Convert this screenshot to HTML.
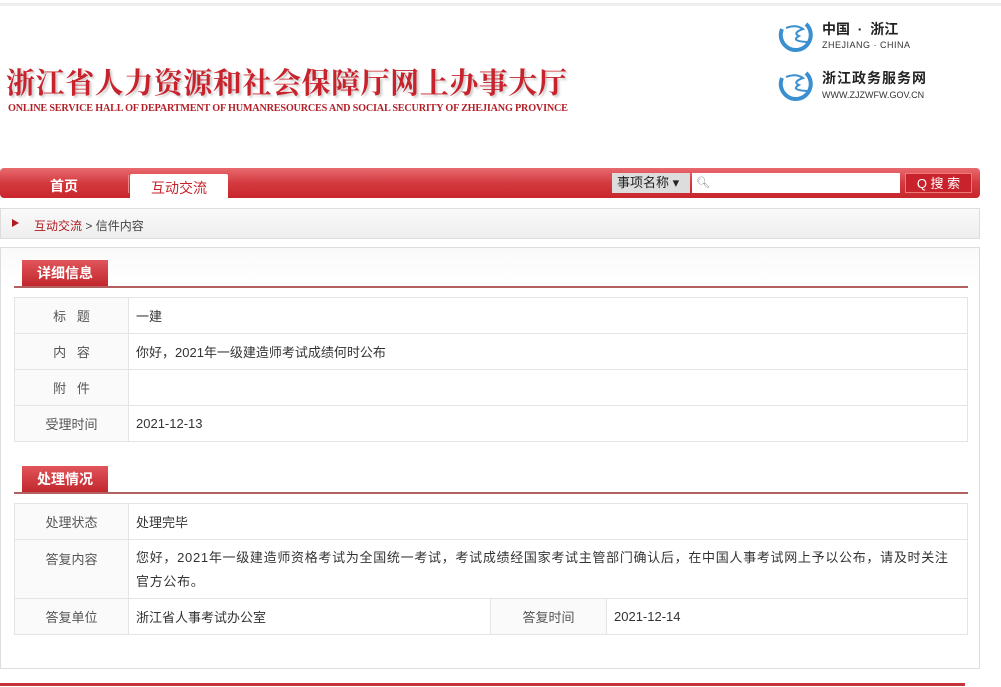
<!DOCTYPE html>
<html><head><meta charset="utf-8"><style>
*{margin:0;padding:0;box-sizing:border-box}
body{width:1001px;height:687px;background:#fff;position:relative;overflow:hidden;font-family:"Liberation Sans","Noto Sans CJK SC",sans-serif;font-size:13px;color:#333}
.a{position:absolute}
.title{left:6px;top:61px;font-family:"Liberation Serif","Noto Serif CJK SC",serif;font-size:29px;font-weight:bold;color:#c8232c;letter-spacing:0.55px;white-space:nowrap;text-shadow:2px 2px 2px #ccc}
.sub{left:8px;top:103px;font-family:"Liberation Serif",serif;font-size:10.2px;color:#b32028;white-space:nowrap;font-weight:bold;letter-spacing:-0.2px}
.nav{left:0;top:168px;width:980px;height:30px;background:linear-gradient(#e86a6e,#d33a3f 50%,#c8262c);border-radius:4px}
table{border-collapse:collapse;position:absolute;left:14px;width:954px}
td{border:1px solid #e4e4e4;height:36px;padding-left:7px;font-size:13px;color:#333}
td.l{width:114px;text-align:center;padding:0;color:#555;background:#fafafa}
.hd{position:absolute;left:22px;width:86px;height:27px;background:linear-gradient(#e0555a,#c0262c);color:#fff;font-weight:bold;font-size:14px;line-height:27px;text-align:center}
.ln{position:absolute;left:14px;width:954px;height:2px;background:#b26060}
</style></head><body>
<div class="a" style="left:0;top:3px;width:1001px;height:3px;background:#eee"></div>
<div class="a title">浙江省人力资源和社会保障厅网上办事大厅</div>
<div class="a sub">ONLINE SERVICE HALL OF DEPARTMENT OF HUMANRESOURCES AND SOCIAL SECURITY OF ZHEJIANG PROVINCE</div>

<svg class="a" style="left:776px;top:17px" width="38" height="38" viewBox="0 0 38 38"><path d="M6 12 A15 15 0 1 0 30 7" fill="none" stroke="#3a8fd0" stroke-width="4"/><path d="M10 11 Q20 7 27 12 Q16 16 23 19 Q14 24 31 25" fill="none" stroke="#3a8fd0" stroke-width="2"/></svg>
<div class="a" style="left:822px;top:19px;font-weight:bold;font-size:14px;color:#222">中国 &nbsp;·&nbsp; 浙江</div>
<div class="a" style="left:822px;top:40px;font-size:9px;color:#333;letter-spacing:.5px">ZHEJIANG · CHINA</div>
<svg class="a" style="left:776px;top:66px" width="38" height="38" viewBox="0 0 38 38"><path d="M6 12 A15 15 0 1 0 30 7" fill="none" stroke="#3a8fd0" stroke-width="4"/><path d="M10 11 Q20 7 27 12 Q16 16 23 19 Q14 24 31 25" fill="none" stroke="#3a8fd0" stroke-width="2"/></svg>
<div class="a" style="left:822px;top:68px;font-weight:bold;font-size:14px;color:#222;letter-spacing:1px">浙江政务服务网</div>
<div class="a" style="left:822px;top:90px;font-size:9px;color:#333">WWW.ZJZWFW.GOV.CN</div>

<div class="a nav"></div>
<div class="a" style="left:50px;top:176px;color:#fff;font-weight:bold;font-size:14px">首页</div>
<div class="a" style="left:128px;top:175px;width:1px;height:18px;background:#e88"></div>
<div class="a" style="left:130px;top:174px;width:98px;height:24px;background:#fff;border-radius:2px 2px 0 0;text-align:center;line-height:28px;color:#c8232c;font-size:14px">互动交流</div>
<div class="a" style="left:612px;top:173px;width:78px;height:20px;background:#ddd;font-size:13px;line-height:20px;padding-left:5px;color:#222">事项名称 ▾</div>
<div class="a" style="left:692px;top:173px;width:208px;height:20px;background:#fff;font-size:11px;line-height:20px;padding-left:4px;color:#888">🔍︎</div>
<div class="a" style="left:905px;top:173px;width:67px;height:20px;background:#c8232c;color:#fff;font-size:13px;line-height:20px;text-align:center;border:1px solid #e77">Q 搜 索</div>

<div class="a" style="left:0;top:208px;width:980px;height:31px;border:1px solid #ddd;background:linear-gradient(#fafafa,#eee)"></div>
<div class="a" style="left:12px;top:219px;width:0;height:0;border-left:7px solid #b01a20;border-top:4px solid transparent;border-bottom:4px solid transparent"></div>
<div class="a" style="left:34px;top:217px;font-size:12px;color:#444"><span style="color:#b01a20">互动交流</span> &gt; 信件内容</div>

<div class="a" style="left:0;top:247px;width:980px;height:422px;border:1px solid #ddd;background:linear-gradient(#fafafa,#fff 40px)"></div>
<div class="hd" style="top:260px">详细信息</div>
<div class="ln" style="top:286px"></div>
<table style="top:297px">
<tr><td class="l" style="height:35px">标 &nbsp; 题</td><td>一建</td></tr>
<tr><td class="l">内 &nbsp; 容</td><td>你好，2021年一级建造师考试成绩何时公布</td></tr>
<tr><td class="l">附 &nbsp; 件</td><td></td></tr>
<tr><td class="l">受理时间</td><td>2021-12-13</td></tr>
</table>

<div class="hd" style="top:466px">处理情况</div>
<div class="ln" style="top:492px"></div>
<table style="top:503px">
<tr><td class="l" style="height:35px">处理状态</td><td colspan="3">处理完毕</td></tr>
<tr><td class="l" style="height:59px;vertical-align:top;padding-top:9px">答复内容</td><td colspan="3" style="line-height:24px;padding-top:2px;padding-right:4px;letter-spacing:0.7px;white-space:nowrap">您好，2021年一级建造师资格考试为全国统一考试，考试成绩经国家考试主管部门确认后，在中国人事考试网上予以公布，请及时关注<br>官方公布。</td></tr>
<tr><td class="l">答复单位</td><td style="width:362px">浙江省人事考试办公室</td><td class="l" style="width:116px">答复时间</td><td>2021-12-14</td></tr>
</table>

<div class="a" style="left:0;top:683px;width:965px;height:3px;background:#c8323a"></div>
</body></html>
